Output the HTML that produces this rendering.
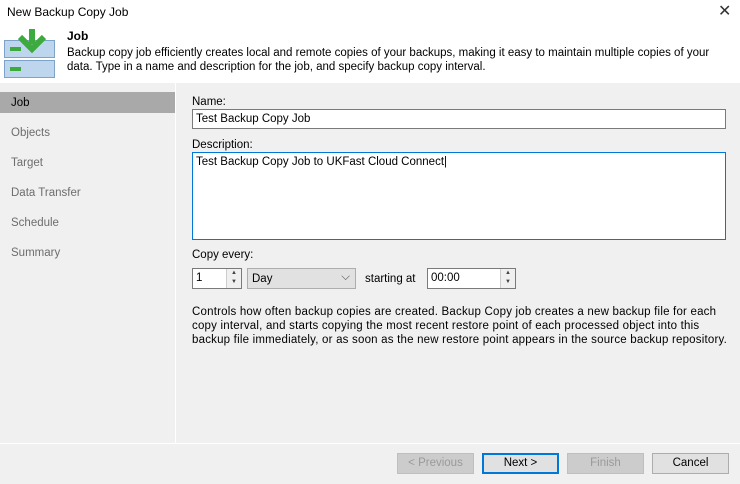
<!DOCTYPE html><html><head><style>
*{margin:0;padding:0;box-sizing:border-box}
body{width:740px;height:484px;background:#f0f0f0;font-family:"Liberation Sans",sans-serif;font-size:11.5px;color:#000;position:relative;overflow:hidden}
.a{position:absolute}
.hdr{left:0;top:0;width:740px;height:83px;background:#fff}
.nav div{position:absolute;left:11px;color:#6d6d6d;font-size:11.5px}
.inp{background:#fff;border:1px solid #7a7a7a;font-size:11.5px;padding:3px 3px}
.btn{height:21px;border:1px solid #adadad;background:#e1e1e1;text-align:center;line-height:19px;font-size:11.5px}
.spin{position:absolute;right:0;top:0;width:15px;height:100%;border-left:1px solid #ccc;background:#f0f0f0;font-size:6px;text-align:center;line-height:9px;color:#444}
</style></head><body>
<div class="a hdr"></div>
<div class="a" style="left:7px;top:5px;font-size:12px">New Backup Copy Job</div>
<div class="a" style="left:718px;top:1px;font-size:16px;color:#333">✕</div>
<svg class="a" style="left:3px;top:28px" width="54" height="52">
<rect x="1.5" y="12.5" width="50" height="17" fill="#bdd6ee" stroke="#7ea3c8"/>
<rect x="1.5" y="32.5" width="50" height="17" fill="#bdd6ee" stroke="#7ea3c8"/>
<rect x="7" y="19" width="11" height="4" fill="#3daa3d"/>
<rect x="7" y="39" width="11" height="4" fill="#3daa3d"/>
<path d="M29 1v15M17 9l12 12 12-12" stroke="#3daa3d" stroke-width="6" fill="none"/>
</svg>
<div class="a" style="left:67px;top:29px;font-weight:bold;font-size:12px">Job</div>
<div class="a" style="left:67px;top:46px;width:670px;line-height:14px;font-size:11.5px">Backup copy job efficiently creates local and remote copies of your backups, making it easy to maintain multiple copies of your data. Type in a name and description for the job, and specify backup copy interval.</div>
<div class="a" style="left:0;top:92px;width:175px;height:21px;background:#a9a9a9"></div>
<div class="a" style="left:175px;top:83px;width:1px;height:361px;background:#fff"></div>
<div class="a" style="left:0;top:443px;width:740px;height:1px;background:#fff"></div>
<div class="nav">
<div style="top:97px;color:#000">Job</div>
<div style="top:127px">Objects</div>
<div style="top:157px">Target</div>
<div style="top:187px">Data Transfer</div>
<div style="top:217px">Schedule</div>
<div style="top:247px">Summary</div>
</div>
<div class="a" style="left:192px;top:96px">Name:</div>
<div class="a inp" style="left:192px;top:109px;width:534px;height:20px">Test Backup Copy Job</div>
<div class="a" style="left:192px;top:139px">Description:</div>
<div class="a inp" style="left:192px;top:152px;width:534px;height:88px;border-color:#0078d7">Test Backup Copy Job to UKFast Cloud Connect|</div>
<div class="a" style="left:192px;top:249px">Copy every:</div>
<div class="a inp" style="left:192px;top:268px;width:50px;height:21px">1<div class="spin">▲<br>▼</div></div>
<div class="a" style="left:247px;top:268px;width:109px;height:21px;background:#e1e1e1;border:1px solid #adadad;padding:4px 4px">Day<span style="position:absolute;right:5px;top:2px;color:#555">⌵</span></div>
<div class="a" style="left:365px;top:273px">starting at</div>
<div class="a inp" style="left:427px;top:268px;width:89px;height:21px">00:00<div class="spin">▲<br>▼</div></div>
<div class="a" style="left:192px;top:305px;width:535px;line-height:14px;letter-spacing:0.2px">Controls how often backup copies are created. Backup Copy job creates a new backup file for each copy interval, and starts copying the most recent restore point of each processed object into this backup file immediately, or as soon as the new restore point appears in the source backup repository.</div>
<div class="a btn" style="left:397px;top:453px;width:77px;color:#9a9a9a;background:#ccc;border-color:#bfbfbf">&lt; Previous</div>
<div class="a btn" style="left:482px;top:453px;width:77px;border:2px solid #0078d7;line-height:17px">Next &gt;</div>
<div class="a btn" style="left:567px;top:453px;width:77px;color:#9a9a9a;background:#ccc;border-color:#bfbfbf">Finish</div>
<div class="a btn" style="left:652px;top:453px;width:77px">Cancel</div>
</body></html>
